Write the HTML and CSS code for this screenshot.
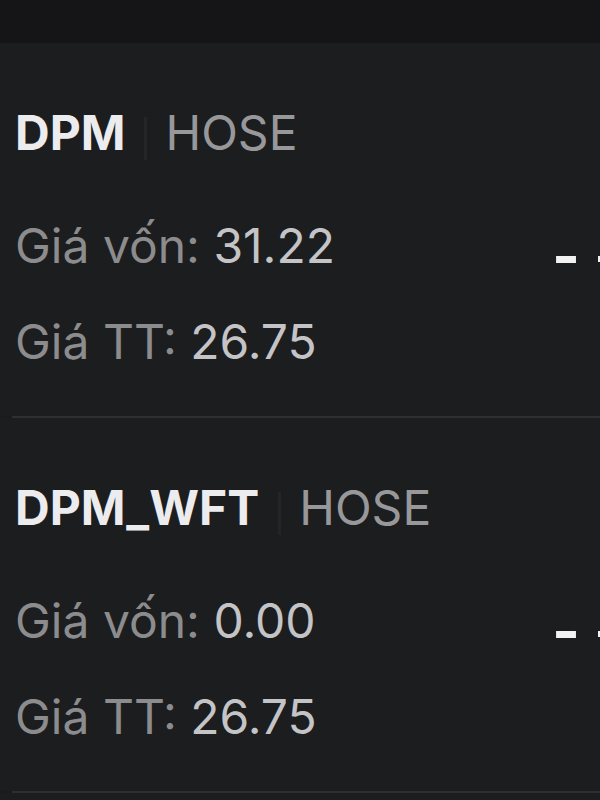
FILE: index.html
```html
<!DOCTYPE html>
<html lang="vi">
<head>
  <meta charset="UTF-8" />
  <title>Danh mục</title>
  <meta name="viewport" content="width=device-width, initial-scale=1" />
  <link rel="stylesheet" href="styles.css">
</head>
<body>

<div class="topbar"></div>

<div class="list">
  <div class="item">
    <div class="title">
      <span class="code">DPM</span>
      <span class="sep"></span>
      <span class="exchange">HOSE</span>
    </div>
    <div class="row">
      <span><span class="label">Giá vốn:</span> <span class="value">31.22</span></span>
      <span class="chg">-</span>
    </div>
    <div class="row">
      <span><span class="label">Giá TT:</span> <span class="value">26.75</span></span>
    </div>
  </div>

  <div class="item">
    <div class="title">
      <span class="code">DPM_WFT</span>
      <span class="sep"></span>
      <span class="exchange">HOSE</span>
    </div>
    <div class="row">
      <span><span class="label">Giá vốn:</span> <span class="value">0.00</span></span>
      <span class="chg">-</span>
    </div>
    <div class="row">
      <span><span class="label">Giá TT:</span> <span class="value">26.75</span></span>
    </div>
  </div>
</div>

</body>
</html>
```

FILE: styles.css
```css
html, body {
  margin: 0;
  padding: 0;
  height: 100%;
  overflow: hidden;
}
body {
  font-family: 'Inter', 'Liberation Sans', sans-serif;
  background: #1c1d1f;
}
.topbar {
  height: 43px;
  background: #151517;
}
.item {
  padding: 62px 0 46px 15px;
  border-bottom: 2px solid #2e2f31;
  position: relative;
}
.item::after {
  content: "";
  position: absolute;
  left: 0;
  bottom: -2px;
  width: 12px;
  height: 2px;
  background: #1a1b1d;
}
.title {
  display: flex;
  align-items: center;
  height: 56px;
  line-height: 56px;
  font-size: 48px;
}
.code {
  font-weight: 700;
  color: #ececee;
}
.sep {
  width: 3px;
  height: 43px;
  margin: 10px 18px 0 19px;
  background: #242527;
}
.exchange {
  color: #98989b;
}
.row {
  display: flex;
  justify-content: space-between;
  align-items: flex-start;
  height: 56px;
  line-height: 56px;
  font-size: 48px;
  margin-top: 40px;
  white-space: nowrap;
}
.title + .row {
  margin-top: 57px;
}
.label {
  color: #8c8c8e;
}
.value {
  color: #c4c4c6;
}
.chg {
  color: #f2f2f2;
  font-weight: 700;
  font-size: 60px;
  line-height: 74px;
}
.chg::after {
  content: "";
  display: inline-block;
  width: 19px;
  height: 6px;
  margin: 0 -17px 0 18px;
  vertical-align: 15px;
  background: #f2f2f2;
}
```
